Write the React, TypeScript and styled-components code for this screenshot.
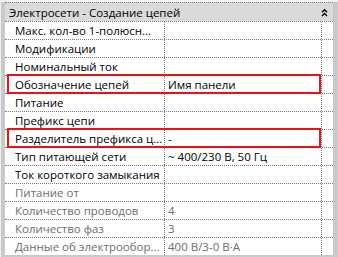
import React from "react";
import styled, { createGlobalStyle } from "styled-components";

const GlobalStyle = createGlobalStyle`
  html, body {
    margin: 0;
    padding: 0;
    background: #ffffff;
  }
  body {
    font-family: "Segoe UI", "Open Sans", "Noto Sans", sans-serif;
  }
`;

const Frame = styled.div`
  position: relative;
  box-sizing: border-box;
  width: 338px;
  height: 257px;
  overflow: hidden;
  background: #f0f0f0;
  padding: 2px 0 0 0;
`;

const Panel = styled.div`
  box-sizing: border-box;
  height: 255px;
  margin-left: 1px;
  background: #ffffff;
  border-left: 4px solid #c9c9c9;
  border-right: 5px solid #c9c9c9;
  border-bottom: 2px solid #c9c9c9;
  font-size: 11.5px;
  color: #000000;
`;

const Header = styled.div`
  display: flex;
  align-items: center;
  justify-content: space-between;
  height: 18px;
  border-top: 1px dotted #7a7a7a;
  background: #dadada;
  padding: 0 4px 0 4px;
  white-space: nowrap;
`;

const Chevron = styled.svg`
  width: 7px;
  height: 9px;
  margin-right: 1px;
`;

const Row = styled.div`
  display: grid;
  grid-template-columns: 160px 157px 1fr;
  height: 17px;
  border-top: 1px dotted #7a7a7a;
`;

const Cell = styled.div<{ $muted?: boolean; $pad: number }>`
  box-sizing: border-box;
  display: flex;
  align-items: center;
  padding-left: ${(p) => p.$pad}px;
  border-right: 1px dotted #7a7a7a;
  color: ${(p) => (p.$muted ? "#6d6d6d" : "#000000")};
  white-space: nowrap;
  overflow: hidden;
  line-height: 17px;
`;

const Spare = styled.div``;

const Marker = styled.div<{ $top: number }>`
  position: absolute;
  box-sizing: border-box;
  left: 7px;
  top: ${(p) => p.$top}px;
  width: 314px;
  height: 20px;
  border: 2px solid #ee1111;
  pointer-events: none;
`;

type Param = { label: string; value?: string; muted?: boolean };

const params: Param[] = [
  { label: "Макс. кол-во 1-полюсн..." },
  { label: "Модификации" },
  { label: "Номинальный ток" },
  { label: "Обозначение цепей", value: "Имя панели" },
  { label: "Питание" },
  { label: "Префикс цепи" },
  { label: "Разделитель префикса ц...", value: "-" },
  { label: "Тип питающей сети", value: "~ 400/230 В, 50 Гц" },
  { label: "Ток короткого замыкания" },
  { label: "Питание от", muted: true },
  { label: "Количество проводов", value: "4", muted: true },
  { label: "Количество фаз", value: "3", muted: true },
  { label: "Данные об электрообор...", value: "400 В/3-0 В·А", muted: true },
];

export default function App() {
  return (
    <>
      <GlobalStyle />
      <Frame>
        <Panel>
          <Header>
            <span>Электросети - Создание цепей</span>
            <Chevron viewBox="0 0 7 9">
              <path d="M1 4.2 L3.5 1.7 L6 4.2" fill="none" stroke="#000" strokeWidth="1.4" />
              <path d="M1 8 L3.5 5.5 L6 8" fill="none" stroke="#000" strokeWidth="1.4" />
            </Chevron>
          </Header>
          {params.map((p) => (
            <Row key={p.label}>
              <Cell $pad={10} $muted={p.muted}>{p.label}</Cell>
              <Cell $pad={3} $muted={p.muted}>{p.value ?? ""}</Cell>
              <Spare />
            </Row>
          ))}
        </Panel>
        <Marker $top={74} />
        <Marker $top={128} />
      </Frame>
    </>
  );
}
